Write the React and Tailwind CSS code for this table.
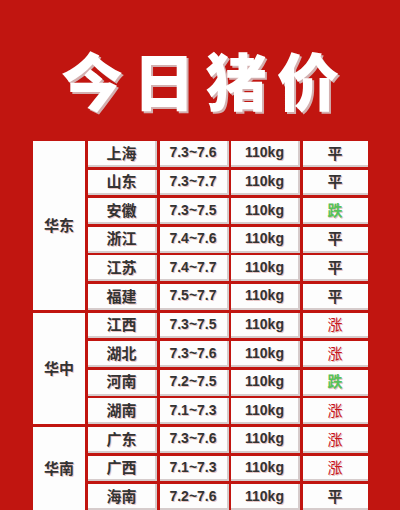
const groups = [
  {
    region: "华东",
    rows: [
      ["上海", "7.3~7.6", "平"],
      ["山东", "7.3~7.7", "平"],
      ["安徽", "7.3~7.5", "跌"],
      ["浙江", "7.4~7.6", "平"],
      ["江苏", "7.4~7.7", "平"],
      ["福建", "7.5~7.7", "平"],
    ],
  },
  {
    region: "华中",
    rows: [
      ["江西", "7.3~7.5", "涨"],
      ["湖北", "7.3~7.6", "涨"],
      ["河南", "7.2~7.5", "跌"],
      ["湖南", "7.1~7.3", "涨"],
    ],
  },
  {
    region: "华南",
    rows: [
      ["广东", "7.3~7.6", "涨"],
      ["广西", "7.1~7.3", "涨"],
      ["海南", "7.2~7.6", "平"],
    ],
  },
];

const cjk = { fontFamily: '"Noto Sans CJK SC", sans-serif' };
const latin = { fontFamily: '"Liberation Sans", Arial, sans-serif' };

function statusClass(s) {
  if (s === "涨") return "text-[#c8161d] font-normal";
  if (s === "跌") return "text-[#58c258] font-bold";
  return "text-[#333] font-bold";
}

function Cell({ w, children, font }) {
  return (
    <div
      className={`${w} h-full flex items-center justify-center bg-[#fdfdfd] border-r-2 border-b-2 border-[#d6cccc] text-[#333] font-bold [text-shadow:1px_1px_0_#e6c4c4]`}
      style={font}
    >
      {children}
    </div>
  );
}

export default function App() {
  return (
    <div className="w-[400px] h-[510px] overflow-hidden bg-[#c11510] flex flex-col">
      {/* Title */}
      <div className="h-[141px] flex items-center justify-center pt-[16px] pl-[10px]">
        <h1
          className="text-white text-[62px] font-black leading-none tracking-[10px] [text-shadow:2px_2px_0_#d3b0b0]"
          style={cjk}
        >
          今日猪价
        </h1>
      </div>

      {/* Table */}
      <div className="pl-[33px] flex flex-col gap-[2.8px]">
        {groups.map((g) => (
          <div key={g.region} className="flex gap-[3px]">
            <div
              className="w-[52px] flex items-center justify-center bg-[#fdfdfd] text-[15px] font-bold text-[#333] [text-shadow:1px_1px_0_#e6c4c4]"
              style={cjk}
            >
              {g.region}
            </div>
            <div className="flex flex-col gap-[2.8px]">
              {g.rows.map((r) => (
                <div key={r[0]} className="h-[25.8px] flex gap-[2.5px]">
                  <Cell w="w-[69px] text-[15px]" font={cjk}>{r[0]}</Cell>
                  <Cell w="w-[69px] text-[14px]" font={latin}>{r[1]}</Cell>
                  <Cell w="w-[69px] text-[14px]" font={latin}>110kg</Cell>
                  <div
                    className={`w-[65px] h-full flex items-center justify-center bg-[#fdfdfd] border-b-2 border-[#d6cccc] text-[15px] [text-shadow:1px_1px_0_#e6c4c4] ${statusClass(r[2])}`}
                    style={cjk}
                  >
                    {r[2]}
                  </div>
                </div>
              ))}
            </div>
          </div>
        ))}
      </div>
    </div>
  );
}
